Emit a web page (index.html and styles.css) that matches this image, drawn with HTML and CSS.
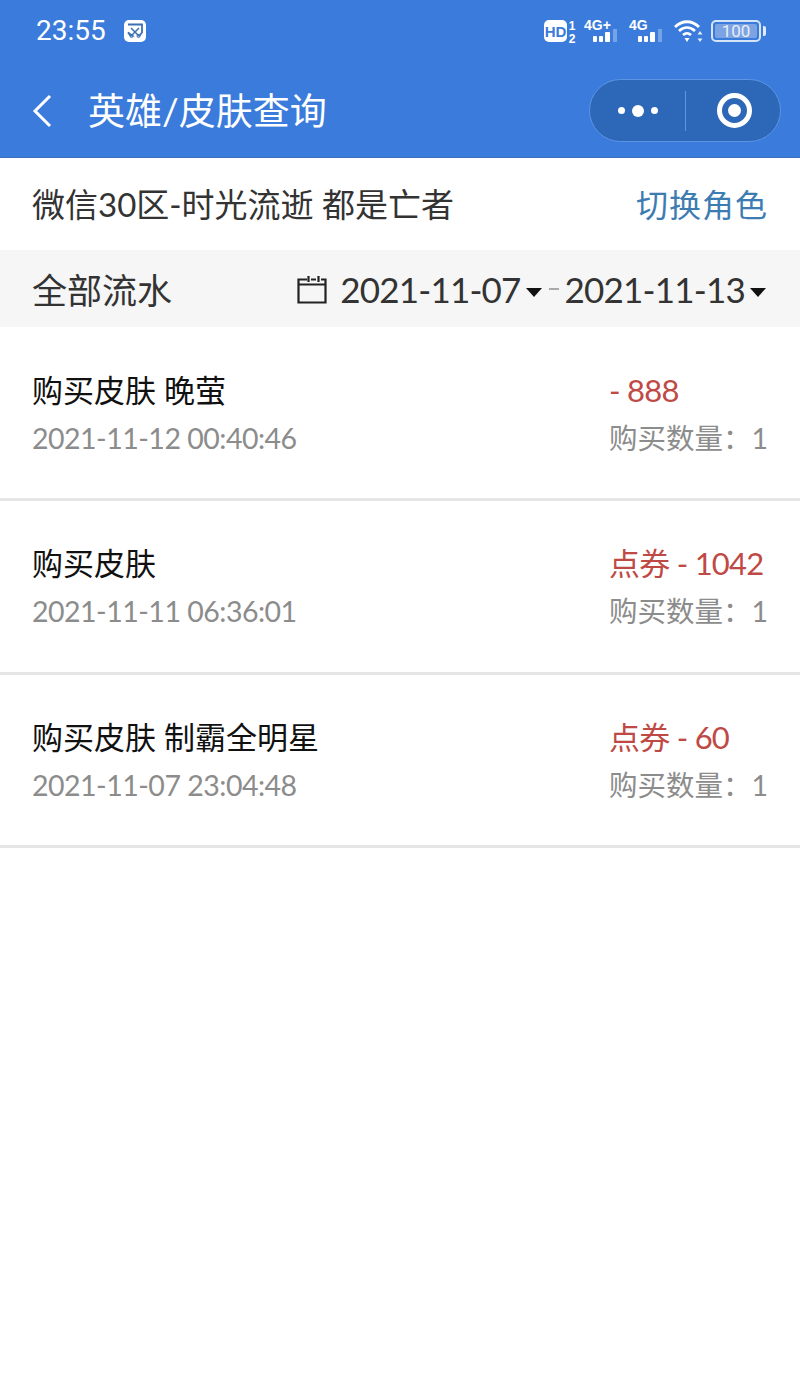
FILE: index.html
```html
<!DOCTYPE html>
<html lang="zh">
<head>
<meta charset="utf-8">
<title>英雄/皮肤查询</title>
<link rel="stylesheet" href="styles.css">
</head>
<body>
<header class="top">
  <div class="status">
    <div class="status-left">
      <span class="time">23:55</span>
      <svg class="app-icon" width="24" height="24" viewBox="0 0 24 24"><rect x="1" y="1" width="22" height="22" rx="5" fill="#fff"/><path d="M5 5.500h14v8l-2.500 3h-1.500M9 16.500H7.500L5 13.500z" fill="none" stroke="#3a6fb5" stroke-width="1.800"/><path d="M8 9l7 7M16 9l-7 7" stroke="#3a6fb5" stroke-width="1.500"/><circle cx="8.500" cy="17" r="1.500" fill="none" stroke="#3a6fb5"/><circle cx="15.500" cy="17" r="1.500" fill="none" stroke="#3a6fb5"/></svg>
    </div>
    <div class="status-right">
      <svg class="hd-icon" width="32" height="32" viewBox="0 -3 32 32"><rect x="0" y="2" width="23" height="22" rx="5" fill="#fff"/><text x="11.500" y="18.500" class="hd">HD</text><text x="28" y="12" class="sim">1</text><text x="28" y="25" class="sim">2</text></svg>
      <svg class="sig" width="36" height="26" viewBox="0 0 36 26"><text x="0" y="12" class="net">4G+</text><rect x="9" y="18" width="4" height="6" rx="1" fill="#fff"/><rect x="15" y="18" width="4" height="6" rx="1" fill="#fff"/><rect x="21" y="14" width="5" height="10" rx="1" fill="#fff"/><rect x="29" y="11" width="4" height="13" fill="#fff" opacity=".3"/></svg>
      <svg class="sig" width="36" height="26" viewBox="0 0 36 26"><text x="0" y="12" class="net">4G</text><rect x="9" y="18" width="4" height="6" rx="1" fill="#fff"/><rect x="15" y="18" width="4" height="6" rx="1" fill="#fff"/><rect x="21" y="14" width="5" height="10" rx="1" fill="#fff"/><rect x="29" y="11" width="4" height="13" fill="#fff" opacity=".3"/></svg>
      <svg width="30" height="26" viewBox="0 0 30 26"><path d="M1 9c7-7 17-7 24 0M5 13c5-4.500 11-4.500 16 0M9 17c3-2.500 5-2.500 8 0" fill="none" stroke="#fff" stroke-width="2.800"/><path d="M10.500 20h5L13 24z" fill="#fff"/><path d="M26 13l2.500 3.500h-5zM26 24l2.500-3.500h-5z" fill="#fff" opacity=".85"/></svg>
      <div class="battery"><div class="battery-body"><span class="battery-fill"></span><span class="battery-num">100</span></div><span class="battery-tip"></span></div>
    </div>
  </div>
  <div class="nav">
    <svg class="back" width="24" height="36" viewBox="0 0 24 36"><path d="M20 3L5 18l15 15" fill="none" stroke="#fff" stroke-width="3"/></svg>
    <h1 class="title">英雄/皮肤查询</h1>
    <div class="capsule">
      <div class="cap-side cap-left"><span class="dot"></span><span class="dot big"></span><span class="dot"></span></div>
      <span class="cap-line"></span>
      <div class="cap-side cap-right"><span class="target"><span class="target-core"></span></span></div>
    </div>
  </div>
</header>
<section class="role">
  <span>微信30区-时光流逝 都是亡者</span>
  <a class="switch">切换角色</a>
</section>
<section class="filter">
  <span class="filter-label">全部流水</span>
  <div class="dates">
    <svg width="30" height="30" viewBox="0 0 30 30"><path d="M10 5.500H1.500v23h27v-23h-4.500M14 5.500h5M1.500 10.500h27M11.500 2v6M21.500 2v6" fill="none" stroke="#222" stroke-width="2.200"/></svg>
    <span class="date">2021-11-07</span><span class="arrow"></span>
    <span class="sep"></span>
    <span class="date">2021-11-13</span><span class="arrow"></span>
  </div>
</section>
<main class="list">
  <article class="row">
    <div class="row-line"><span>购买皮肤 晚萤</span><span class="price">- 888</span></div>
    <div class="row-line sub"><span class="stamp">2021-11-12 00:40:46</span><span>购买数量：1</span></div>
  </article>
  <article class="row">
    <div class="row-line"><span>购买皮肤</span><span class="price">点券 - 1042</span></div>
    <div class="row-line sub"><span class="stamp">2021-11-11 06:36:01</span><span>购买数量：1</span></div>
  </article>
  <article class="row">
    <div class="row-line"><span>购买皮肤 制霸全明星</span><span class="price">点券 - 60</span></div>
    <div class="row-line sub"><span class="stamp">2021-11-07 23:04:48</span><span>购买数量：1</span></div>
  </article>
</main>
</body>
</html>
```

FILE: styles.css
```css
* { box-sizing: border-box; }
html, body { margin: 0; padding: 0; }
body {
  width: 800px;
  height: 1387px;
  background: #fff;
  color: #222;
  font-family: Lato, "Noto Sans CJK SC", "Noto Sans", sans-serif;
  overflow: hidden;
}
.top { height: 158px; background: #3a7bdb; color: #fff; border-bottom: 1px solid #3c6fb8; }
.status {
  height: 62px;
  padding: 0 34px 0 36px;
  display: flex;
  justify-content: space-between;
  align-items: center;
}
.status-left { display: flex; align-items: center; gap: 17px; }
.time { font: 28px/1 Roboto, sans-serif; }
.status-right { display: flex; align-items: center; gap: 9px; }
.hd-icon { margin-right: -1px; }
.hd { font: 700 15px "Liberation Sans", sans-serif; fill: #3a7bdb; text-anchor: middle; }
.sim { font: 700 12px "Liberation Sans", sans-serif; fill: #fff; text-anchor: middle; }
.net { font: 700 14px "Liberation Sans", sans-serif; fill: #fff; }
.battery { display: flex; align-items: center; margin-left: -2px; }
.battery-body {
  position: relative;
  width: 50px;
  height: 22px;
  border: 2px solid #d6e4f8;
  border-radius: 5px;
  padding: 2px;
}
.battery-fill { display: block; width: 100%; height: 100%; background: #7ca3e2; border-radius: 2px; }
.battery-num {
  position: absolute;
  inset: 0;
  text-align: center;
  font: 17px/18px Roboto, sans-serif;
  color: #e8eefa;
}
.battery-tip { width: 3px; height: 10px; margin-left: 2px; background: #e0eafa; border-radius: 0 2px 2px 0; }
.nav { height: 95px; display: flex; align-items: center; padding: 2px 19px 0 30px; }
.back { flex: none; }
.title { margin: 0 0 0 34px; font-size: 37px; font-weight: 400; line-height: 44px; flex: 1; white-space: nowrap; }
.capsule {
  width: 192px;
  height: 63px;
  display: flex;
  align-items: center;
  background: #2d67b8;
  border: 1px solid #5f94e4;
  border-radius: 32px;
}
.cap-side { display: flex; align-items: center; justify-content: center; gap: 7px; }
.cap-left { width: 95px; }
.cap-right { flex: 1; padding-left: 3px; }
.cap-line { width: 1px; height: 40px; background: #5f94e4; }
.dot { width: 7px; height: 7px; border-radius: 50%; background: #fff; }
.dot.big { width: 12px; height: 12px; }
.target {
  width: 35px;
  height: 35px;
  border: 5px solid #fff;
  border-radius: 50%;
  display: flex;
  align-items: center;
  justify-content: center;
}
.target-core { width: 13px; height: 13px; border-radius: 50%; background: #fff; }
.role {
  height: 92px;
  padding: 0 32px 2px;
  display: flex;
  align-items: center;
  justify-content: space-between;
  font-size: 33px;
  color: #333;
}
.switch { color: #3d7cb3; font-size: 32px; letter-spacing: 1px; }
.filter {
  height: 77px;
  padding: 0 32px;
  display: flex;
  align-items: center;
  justify-content: space-between;
  background: #f6f6f6;
  font-size: 35px;
  color: #333;
}
.dates { display: flex; align-items: center; margin-right: 2px; font-size: 35px; letter-spacing: -0.800px; }
.dates svg { margin-right: 13px; }
.arrow {
  width: 0;
  height: 0;
  margin: 8px 0 0 5px;
  border-left: 8.500px solid transparent;
  border-right: 8.500px solid transparent;
  border-top: 9px solid #111;
}
.sep { width: 10px; height: 2px; margin: 0 6px 0 7px; background: #aaa; }
.list { padding-top: 1px; }
.row {
  height: 173.300px;
  padding: 38px 32px 0;
  border-bottom: 3px solid #e6e6e6;
}
.row-line {
  display: flex;
  justify-content: space-between;
  font-size: 31px;
  line-height: 48px;
  color: #111;
}
.row-line .price { color: #bf4a45; width: 159px; white-space: nowrap; letter-spacing: -0.750px; }
.sub { color: #8c8c8c; font-size: 28.500px; }
.stamp { letter-spacing: -0.500px; }
```
